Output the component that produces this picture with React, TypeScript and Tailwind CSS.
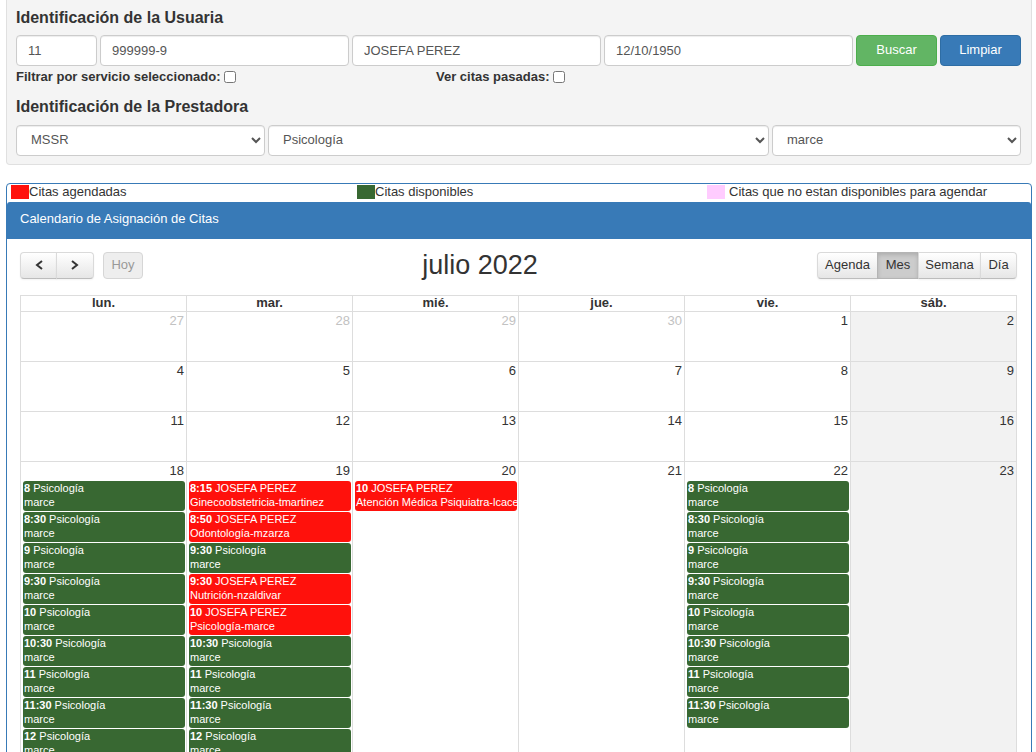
import type { ReactNode } from 'react';
import clsx from 'clsx';

type Appointment = { time: string; title: string; detail: string; booked?: boolean };
type Day = { number: number; otherMonth?: boolean; appointments?: Appointment[] };

const free = (time: string): Appointment => ({ time, title: 'Psicología', detail: 'marce' });
const booked = (time: string, detail: string): Appointment => ({
  time,
  title: 'JOSEFA PEREZ',
  detail,
  booked: true,
});

const weekdays = ['lun.', 'mar.', 'mié.', 'jue.', 'vie.', 'sáb.'];

const weeks: Day[][] = [
  [
    { number: 27, otherMonth: true },
    { number: 28, otherMonth: true },
    { number: 29, otherMonth: true },
    { number: 30, otherMonth: true },
    { number: 1 },
    { number: 2 },
  ],
  [4, 5, 6, 7, 8, 9].map((number) => ({ number })),
  [11, 12, 13, 14, 15, 16].map((number) => ({ number })),
  [
    {
      number: 18,
      appointments: ['8', '8:30', '9', '9:30', '10', '10:30', '11', '11:30', '12'].map(free),
    },
    {
      number: 19,
      appointments: [
        booked('8:15', 'Ginecoobstetricia-tmartinez'),
        booked('8:50', 'Odontología-mzarza'),
        free('9:30'),
        booked('9:30', 'Nutrición-nzaldivar'),
        booked('10', 'Psicología-marce'),
        free('10:30'),
        free('11'),
        free('11:30'),
        free('12'),
      ],
    },
    { number: 20, appointments: [booked('10', 'Atención Médica Psiquiatra-lcace')] },
    { number: 21 },
    {
      number: 22,
      appointments: ['8', '8:30', '9', '9:30', '10', '10:30', '11', '11:30'].map(free),
    },
    { number: 23 },
  ],
];

const fieldClass =
  'h-[31px] w-full min-w-0 rounded-[4px] border border-[#ccc] bg-white text-[13px] text-[#555] shadow-[inset_0_1px_1px_rgba(0,0,0,0.075)]';

function Field({ label, value, className }: { label: string; value: string; className: string }) {
  return (
    <div className={className}>
      <input type="text" aria-label={label} defaultValue={value} className={clsx(fieldClass, 'px-[11px]')} />
    </div>
  );
}

function SelectField({ label, value, className }: { label: string; value: string; className: string }) {
  return (
    <div className={className}>
      <select aria-label={label} defaultValue={value} className={clsx(fieldClass, 'pb-[2px] pl-[10px]')}>
        <option>{value}</option>
      </select>
    </div>
  );
}

function CheckField({ id, label, className }: { id: string; label: string; className: string }) {
  return (
    <div className={clsx('flex items-center gap-1', className)}>
      <label htmlFor={id} className="font-bold">
        {label}
      </label>
      <input id={id} type="checkbox" className="size-3" />
    </div>
  );
}

function Legend({ color, children }: { color: string; children: ReactNode }) {
  return (
    <div className="flex items-center">
      <span className={clsx('h-[14px] w-[18px]', color)} />
      {children}
    </div>
  );
}

function ToolButton({
  children,
  label,
  active,
  disabled,
  className,
}: {
  children: ReactNode;
  label?: string;
  active?: boolean;
  disabled?: boolean;
  className?: string;
}) {
  return (
    <button
      type="button"
      aria-label={label}
      disabled={disabled}
      className={clsx(
        'flex h-[27px] items-center justify-center border pb-[2px] text-[13px]',
        active
          ? 'border-[#b4b4b4] bg-[#cccccc] shadow-[inset_0_2px_4px_rgba(0,0,0,0.15)]'
          : disabled
            ? 'border-[#d6d6d6] bg-[#eeeeee] text-[#999]'
            : 'border-[#dadada] border-b-[#bcbcbc] bg-linear-to-b from-white to-[#e6e6e6] shadow-[0_1px_2px_rgba(0,0,0,0.05)]',
        className,
      )}
    >
      {children}
    </button>
  );
}

function Chevron({ points }: { points: string }) {
  return (
    <svg width="10" height="10" viewBox="0 0 10 10" fill="none" stroke="#333" strokeWidth="2" className="mt-px">
      <polyline points={points} />
    </svg>
  );
}

function AppointmentCard({ item }: { item: Appointment }) {
  return (
    <a
      href="#cita"
      className={clsx(
        'block h-[30px] overflow-hidden rounded-[3px] px-px text-[11px] leading-[14px] whitespace-nowrap text-white',
        item.booked ? 'bg-[#ff110c]' : 'bg-[#386832]',
      )}
    >
      <span className="font-bold">{item.time}</span> {item.title}
      <br />
      {item.detail}
    </a>
  );
}

export default function App() {
  return (
    <main className="bg-white pr-1 pl-[6px] font-['Liberation_Sans',Arial,sans-serif] text-[13px] leading-[18px] text-[#333]">
      <form className="rounded-b-[4px] border border-t-0 border-[#e0e0e0] bg-[#f4f4f4] px-[9px] pt-2 pb-2">
        <h2 className="mb-[7px] text-base leading-5 font-bold">Identificación de la Usuaria</h2>
        <div className="grid grid-cols-12 gap-x-[3px] gap-y-[2px] pr-px">
          <Field label="Número" value="11" className="col-span-1" />
          <Field label="Documento" value="999999-9" className="col-span-3" />
          <Field label="Nombre" value="JOSEFA PEREZ" className="col-span-3" />
          <Field label="Fecha de nacimiento" value="12/10/1950" className="col-span-3" />
          <button type="button" className="h-[31px] rounded-[4px] border border-[#4cae4c] bg-[#62b564] pb-[2px] text-white">
            Buscar
          </button>
          <button type="button" className="h-[31px] rounded-[4px] border border-[#2e6da4] bg-[#387ab7] pb-[2px] text-white">
            Limpiar
          </button>
          <CheckField id="filtrar" label="Filtrar por servicio seleccionado:" className="col-span-5" />
          <CheckField id="pasadas" label="Ver citas pasadas:" className="col-span-7" />
        </div>
        <h2 className="mt-[11px] mb-2 text-base leading-5 font-bold">Identificación de la Prestadora</h2>
        <div className="grid grid-cols-12 gap-[3px] pr-px">
          <SelectField label="Centro" value="MSSR" className="col-span-3" />
          <SelectField label="Servicio" value="Psicología" className="col-span-6" />
          <SelectField label="Prestadora" value="marce" className="col-span-3" />
        </div>
      </form>

      <section className="mt-[18px] rounded-[4px] border border-[#387ab7]">
        <div className="grid grid-cols-[346fr_350fr_324fr] pb-[2px] pl-1 leading-[16px]">
          <Legend color="bg-[#ff110c]">Citas agendadas</Legend>
          <Legend color="bg-[#386832]">Citas disponibles</Legend>
          <Legend color="mr-1 bg-[#ffccff]">Citas que no estan disponibles para agendar</Legend>
        </div>
        <h3 className="rounded-t-[3px] bg-[#387ab7] px-[13px] pt-2 pb-[11px] text-[13px] leading-[18px] text-white">
          Calendario de Asignación de Citas
        </h3>

        <div className="pt-[13px] pr-[14px] pb-4 pl-[13px]">
          <div className="flex items-center justify-between">
            <div className="flex">
              <ToolButton label="Anterior" className="w-[37px] rounded-l-[4px]">
                <Chevron points="8,1 3,5 8,9" />
              </ToolButton>
              <ToolButton label="Siguiente" className="-ml-px w-[38px] rounded-r-[4px]">
                <Chevron points="2,1 7,5 2,9" />
              </ToolButton>
              <ToolButton disabled className="ml-[9px] w-10 rounded-[4px]">
                Hoy
              </ToolButton>
            </div>
            <h2 className="text-[27px] leading-[27px]">julio 2022</h2>
            <div className="flex">
              <ToolButton className="w-[61px] rounded-l-[4px]">Agenda</ToolButton>
              <ToolButton active className="-ml-px w-[42px]">
                Mes
              </ToolButton>
              <ToolButton className="-ml-px w-[63px]">Semana</ToolButton>
              <ToolButton className="-ml-px w-[37px] rounded-r-[4px]">Día</ToolButton>
            </div>
          </div>

          <table className="mt-4 w-full table-fixed border-collapse">
            <thead>
              <tr>
                {weekdays.map((name) => (
                  <th key={name} className="h-4 border border-[#ddd] p-0 align-top leading-[13px] font-bold">
                    {name}
                  </th>
                ))}
              </tr>
            </thead>
            <tbody>
              {weeks.map((week) => (
                <tr key={week[0].number}>
                  {week.map((day, index) => (
                    <td
                      key={day.number}
                      className={clsx(
                        'h-[50px] border border-[#ddd] p-0 align-top',
                        index === 5 && 'bg-[#f2f2f2]',
                      )}
                    >
                      <div className={clsx('pr-[2px] pb-px text-right', day.otherMonth && 'text-[#c2c2c2]')}>
                        {day.number}
                      </div>
                      {day.appointments && (
                        <div className="mr-px ml-[2px] flex flex-col gap-px">
                          {day.appointments.map((item) => (
                            <AppointmentCard key={item.time + item.title} item={item} />
                          ))}
                        </div>
                      )}
                    </td>
                  ))}
                </tr>
              ))}
            </tbody>
          </table>
        </div>
      </section>
    </main>
  );
}
